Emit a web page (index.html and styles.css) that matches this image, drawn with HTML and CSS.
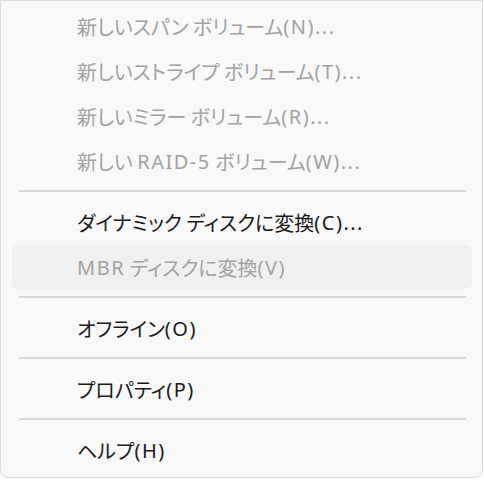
FILE: index.html
```html
<!DOCTYPE html>
<html lang="ja">
<head>
<meta charset="utf-8">
<link rel="stylesheet" href="styles.css">
</head>
<body>
<div class="menu">
  <div class="item disabled">新しいスパン ボリューム<span class="lat">(N)...</span></div>
  <div class="item disabled">新しいストライプ ボリューム<span class="lat">(T)...</span></div>
  <div class="item disabled">新しいミラー ボリューム<span class="lat">(R)...</span></div>
  <div class="item disabled">新しい <span class="lat">RAID-5</span> ボリューム<span class="lat">(W)...</span></div>
  <div class="sep"></div>
  <div class="item">ダイナミック ディスクに変換<span class="lat">(C)...</span></div>
  <div class="item disabled hover"><span class="lat">MBR</span> ディスクに変換<span class="lat">(V)</span></div>
  <div class="sep"></div>
  <div class="item">オフライン<span class="lat">(O)</span></div>
  <div class="sep"></div>
  <div class="item">プロパティ<span class="lat">(P)</span></div>
  <div class="sep"></div>
  <div class="item">ヘルプ<span class="lat">(H)</span></div>
</div>
</body>
</html>
```
FILE: styles.css
```css
html, body {
  margin: 0;
  padding: 0;
  background: #ffffff;
}
.menu {
  width: 483px;
  height: 478px;
  box-sizing: border-box;
  border: 1px solid #dcdcdc;
  border-radius: 0 0 8px 8px;
  background: #f9f9f9;
  padding: 3px 10px 0 11px;
  display: flex;
  flex-direction: column;
  font-family: "Noto Sans CJK JP", sans-serif;
  font-feature-settings: "palt";
  font-size: 20px;
  color: #1a1a1a;
}
.item {
  height: 45px;
  flex: none;
  display: flex;
  align-items: center;
  padding-left: 65px;
  border-radius: 6px;
  white-space: pre;
}
.lat {
  font-family: "Noto Sans", "Noto Sans CJK JP", sans-serif;
  font-feature-settings: normal;
  letter-spacing: 1.5px;
}
.item.disabled {
  color: #a2a2a2;
}
.item.hover {
  background: #f0f0f0;
  height: 44px;
  margin-bottom: 1px;
}
.sep {
  flex: none;
  height: 2px;
  background: #d8d8d8;
  margin: 6px 6px 8px 7px;
}
```
